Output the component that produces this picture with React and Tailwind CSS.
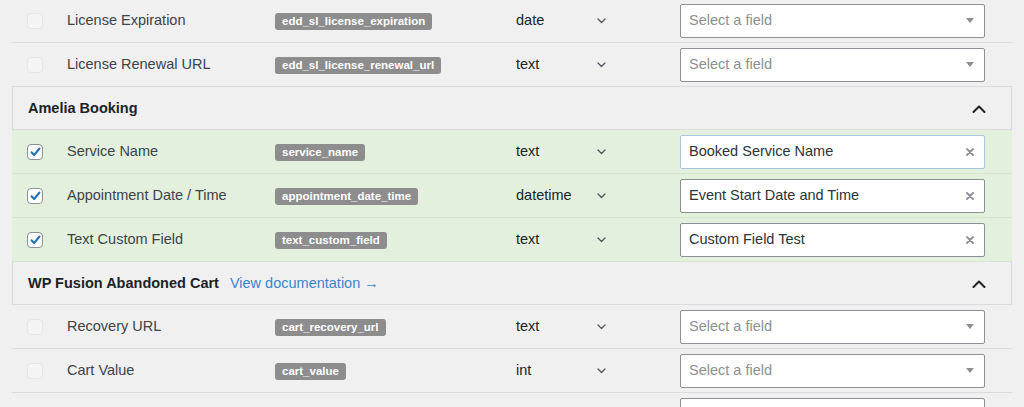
import React from "react";

const sections = [
  {
    type: "rows",
    rows: [
      { label: "License Expiration", key: "edd_sl_license_expiration", kind: "date" },
      { label: "License Renewal URL", key: "edd_sl_license_renewal_url", kind: "text" },
    ],
  },
  {
    type: "group",
    title: "Amelia Booking",
    rows: [
      { label: "Service Name", key: "service_name", kind: "text", value: "Booked Service Name", focus: true },
      { label: "Appointment Date / Time", key: "appointment_date_time", kind: "datetime", value: "Event Start Date and Time" },
      { label: "Text Custom Field", key: "text_custom_field", kind: "text", value: "Custom Field Test" },
    ],
  },
  {
    type: "group",
    title: "WP Fusion Abandoned Cart",
    link: "View documentation →",
    rows: [
      { label: "Recovery URL", key: "cart_recovery_url", kind: "text" },
      { label: "Cart Value", key: "cart_value", kind: "int" },
      // next row is cut off by the window, only the top of its input shows
      { label: "", key: "", kind: "", blank: true },
    ],
  },
];

const ChevronDown = () => (
  <svg width="9" height="6" viewBox="0 0 9 6" fill="none">
    <path d="M1 1l3.5 3.5L8 1" stroke="#50575e" strokeWidth="1.3" strokeLinecap="round" strokeLinejoin="round" />
  </svg>
);

const ChevronUp = () => (
  <svg width="14" height="8" viewBox="0 0 14 8" fill="none">
    <path d="M1.5 7L7 1.5 12.5 7" stroke="#1d2327" strokeWidth="2" strokeLinecap="round" strokeLinejoin="round" />
  </svg>
);

const Checkbox = ({ checked }) =>
  checked ? (
    <span className="w-[16px] h-[16px] shrink-0 rounded-[4px] border border-[#8c8f94] bg-white flex items-center justify-center">
      <svg width="11" height="10" viewBox="0 0 11 10" fill="none">
        <path d="M1.5 5.2l2.7 2.8L9.5 1.5" stroke="#2271b1" strokeWidth="2" strokeLinecap="round" strokeLinejoin="round" />
      </svg>
    </span>
  ) : (
    <span className="w-[16px] h-[16px] shrink-0 rounded-[4px] border border-[#e6e6e7] bg-[#f4f4f5]" />
  );

const FieldSelect = ({ value, focus, blank }) => (
  <div
    className={`w-[305px] h-[34px] shrink-0 bg-white rounded-[2px] border flex items-center pl-[8px] pr-[10px] ${
      focus ? "border-[#a9c6de]" : "border-[#8c8f94]"
    }`}
  >
    {blank ? null : value ? (
      <>
        <span className="flex-1 text-[#2c3338]">{value}</span>
        <svg width="8" height="8" viewBox="0 0 8 8" fill="none">
          <path d="M1 1l6 6M7 1L1 7" stroke="#8c8f94" strokeWidth="1.8" strokeLinecap="round" />
        </svg>
      </>
    ) : (
      <>
        <span className="flex-1 text-[#8c8f94]">Select a field</span>
        <svg width="8" height="5" viewBox="0 0 8 5">
          <path d="M0 0h8L4 5z" fill="#8c8f94" />
        </svg>
      </>
    )}
  </div>
);

const Row = ({ row, checked }) => (
  <div
    className={`flex items-center h-[44px] border-b pl-[15px] ${
      checked ? "bg-[#e2f0dd] border-[#d3e6ce]" : "border-[#dcdcde]"
    }`}
  >
    {row.blank ? <span className="w-[16px] shrink-0" /> : <Checkbox checked={checked} />}
    <span className="ml-[24px] w-[208px] shrink-0 text-[#3c434a]">{row.label}</span>
    <span className="w-[241px] shrink-0">
      {row.key && (
        <span className="inline-block bg-[#8d8d8e] text-white font-bold text-[11.5px] leading-[17px] px-[7px] rounded-[3px]">
          {row.key}
        </span>
      )}
    </span>
    <span className="w-[81px] shrink-0 text-[#1d2327]">{row.kind}</span>
    <span className="w-[83px] shrink-0 flex">{row.kind && <ChevronDown />}</span>
    <FieldSelect value={row.value} focus={row.focus} blank={row.blank} />
  </div>
);

const GroupHeader = ({ title, link }) => (
  <div className="flex items-center h-[43px] border border-t-0 border-[#dcdcde] pt-[2px] pl-[15px] pr-[25px]">
    <span className="font-bold text-[#1d2327]">{title}</span>
    {link && <span className="ml-[11px] text-[#3a86cc]">{link}</span>}
    <span className="ml-auto flex">
      <ChevronUp />
    </span>
  </div>
);

export default function App() {
  return (
    <div className="h-[407px] overflow-hidden bg-[#f0f0f1] px-[12px] font-['Liberation_Sans',Arial,sans-serif] text-[14.5px]">
      <div className="-mt-px">
        {sections.map((section, i) =>
          section.type === "rows" ? (
            section.rows.map((row) => <Row key={row.key} row={row} />)
          ) : (
            <div key={i}>
              <GroupHeader title={section.title} link={section.link} />
              {section.rows.map((row, j) => (
                <Row key={j} row={row} checked={!!row.value} />
              ))}
            </div>
          )
        )}
      </div>
    </div>
  );
}
